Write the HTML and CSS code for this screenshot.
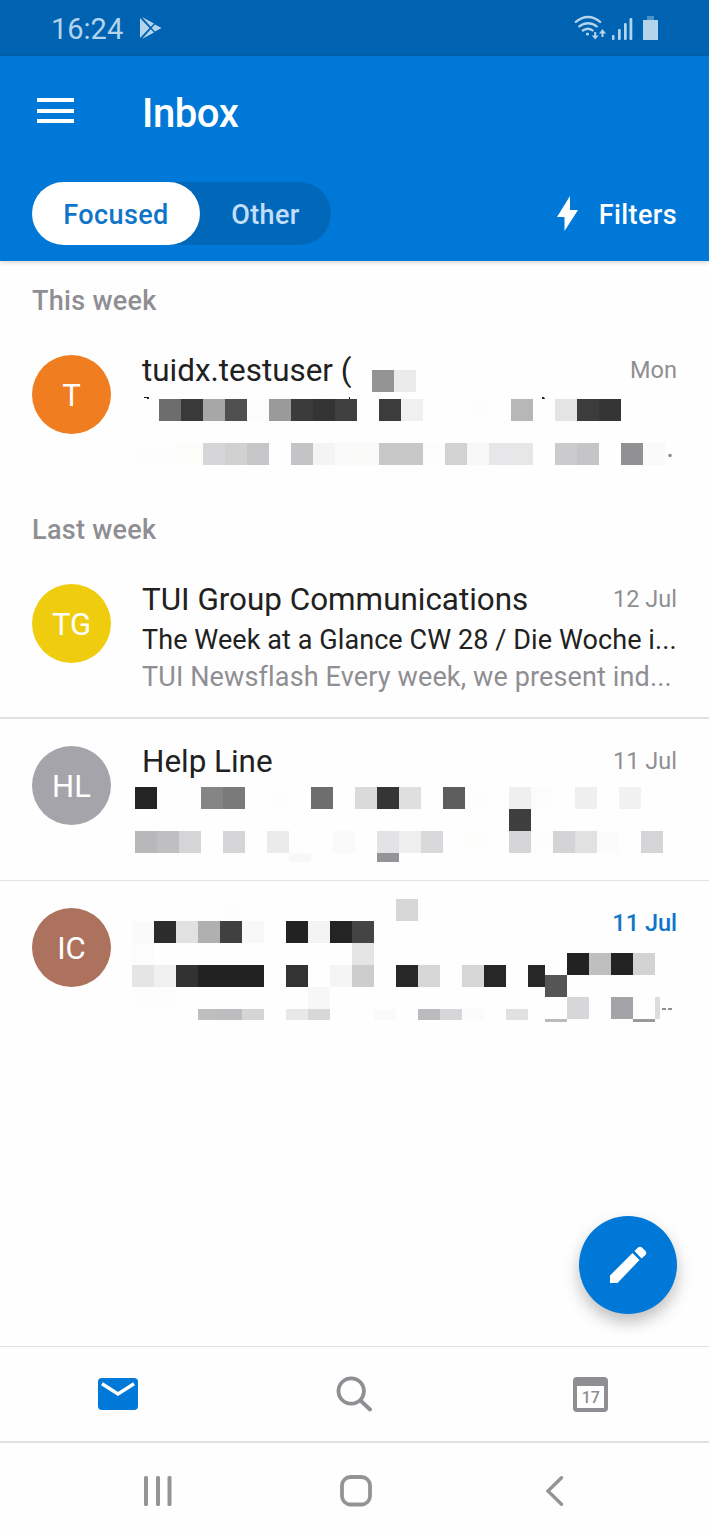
FILE: index.html
```html
<!DOCTYPE html>
<html lang="en">
<head>
    <meta charset="UTF-8">
    <meta name="viewport" content="width=device-width, initial-scale=1.0">
    <title>Inbox</title>
    <link rel="stylesheet" href="styles.css">
</head>
<body>
    <div class="status-bar">
        <span class="clock">16:24</span>
        <svg class="play-icon" width="22" height="22" viewBox="0 0 22 22">
            <path d="M0 1l9.500 10L0 21zM2 0l12 6.500-3.200 3.300zM2 22l12-6.500-3.200-3.300zM15 7.500l6.500 3.500-6.500 3.500-3.300-3.500z"/>
        </svg>
        <svg class="status-icons" width="86" height="26" viewBox="574 15 86 26">
            <g fill="none" stroke="#b4d4ec" stroke-width="2.200">
                <path d="M575 22.500q13-11 26 0M578.500 27q9.500-7.500 19 0M582 31q6-4.500 11.500 0"/>
            </g>
            <g fill="#b4d4ec">
                <circle cx="587.500" cy="34" r="1.600"/>
                <path d="M594.200 32h2v3.500h2.500l-3.500 4-3.500-4h2.500zM601.500 37h2v-3.500h2.500l-3.500-4.500-3.500 4.500h2.500z"/>
                <rect x="612" y="35" width="2.500" height="5" rx="1"/>
                <rect x="618" y="29" width="2.700" height="11" rx="1"/>
                <rect x="624" y="23" width="2.700" height="17" rx="1"/>
                <rect x="629.500" y="18" width="2.800" height="22" rx="1"/>
                <rect x="643" y="20" width="15" height="20"/>
            </g>
            <rect x="647" y="16" width="7" height="4" fill="#4c93ca"/>
        </svg>
    </div>
    <header>
        <div class="title-row">
            <svg class="menu-icon" width="37" height="26" viewBox="0 0 37 26" fill="#fff">
                <rect width="37" height="4"/>
                <rect y="11" width="37" height="4"/>
                <rect y="21" width="37" height="4"/>
            </svg>
            <h1>Inbox</h1>
        </div>
        <div class="filter-row">
            <div class="switch">
                <span class="tab active">Focused</span>
                <span class="tab">Other</span>
            </div>
            <div class="filters">
                <svg width="22" height="36" viewBox="0 0 22 36"><path d="M13 0L0 21h7.500v14L21 14h-8z" fill="#fff"/></svg>
                <span>Filters</span>
            </div>
        </div>
    </header>

    <main>
        <h2>This week</h2>
        <div class="message no-line">
            <div class="avatar orange">T</div>
            <div class="content">
                <div class="top"><span class="sender">tuidx.testuser (</span><span class="date">Mon</span></div>
            </div>
            <svg class="mosaic" id="mosaic1" width="709" height="162" viewBox="0 328 709 162">
                <path d="M144 397h5v2h-2v-1h-3zM349 397h1v2h-1zM542 397h2l1 2h-3z" fill="#222"/>
                <circle cx="670" cy="455.500" r="1.800" fill="#8e8e93"/>
            </svg>
        </div>

        <h2>Last week</h2>
        <div class="message">
            <div class="avatar yellow">TG</div>
            <div class="content">
                <div class="top"><span class="sender">TUI Group Communications</span><span class="date">12 Jul</span></div>
                <div class="subject">The Week at a Glance CW 28 / Die Woche i...</div>
                <div class="preview">TUI Newsflash Every week, we present ind...</div>
            </div>
        </div>
        <div class="message thin-line">
            <div class="avatar gray">HL</div>
            <div class="content">
                <div class="top"><span class="sender">Help Line</span><span class="date">11 Jul</span></div>
            </div>
            <svg class="mosaic" id="mosaic2" width="709" height="161" viewBox="0 719 709 161"></svg>
        </div>
        <div class="message no-line">
            <div class="avatar brown">IC</div>
            <div class="content">
                <div class="top"><span class="sender"></span><span class="date unread">11 Jul</span></div>
            </div>
            <svg class="mosaic" id="mosaic3" width="709" height="162" viewBox="0 881 709 162">
                <path d="M662 1008h4v2h-4zM668 1008h4v2h-4z" fill="#8e8e93"/>
            </svg>
        </div>
        <div class="compose">
            <svg width="38" height="38" viewBox="0 0 38 38" fill="#fff">
                <path d="M1 29.500L23.500 7l7 7L8.500 37H1zM25.500 5L29 1.500q2-1.500 4 0l3.500 3.500q1.500 2 0 4L32.500 12.500z"/>
            </svg>
        </div>
    </main>

    <nav class="tabs">
        <div class="nav-item">
            <svg width="40" height="32" viewBox="0 0 40 32">
                <rect width="40" height="32" rx="4" fill="#0078d7"/>
                <path d="M4 5.800L20 16 36 5.800" fill="none" stroke="#fff" stroke-width="3.400"/>
            </svg>
        </div>
        <div class="nav-item">
            <svg width="36" height="36" viewBox="0 0 36 36" fill="none" stroke="#8e8e93">
                <circle cx="15.200" cy="15" r="12.700" stroke-width="3.800"/>
                <path d="M25.500 25.500l8.500 8" stroke-width="3.800" stroke-linecap="round"/>
            </svg>
        </div>
        <div class="nav-item">
            <div class="calendar">17</div>
        </div>
    </nav>
    <footer>
        <svg class="recents" width="28" height="30" viewBox="0 0 28 30" fill="#949494">
            <rect width="4" height="30" rx="1.500"/>
            <rect x="12" width="4" height="30" rx="1.500"/>
            <rect x="23.500" width="4" height="30" rx="1.500"/>
        </svg>
        <svg class="home" width="32" height="32" viewBox="0 0 32 32">
            <rect x="2" y="2" width="28" height="27.500" rx="8.500" fill="none" stroke="#949494" stroke-width="3.800"/>
        </svg>
        <svg class="back" width="19" height="30" viewBox="0 0 19 30">
            <path d="M16.500 1.800L3 15l13.500 13.200" fill="none" stroke="#949494" stroke-width="3.400" stroke-linecap="round"/>
        </svg>
    </footer>
    <script src="script.js"></script>
</body>
</html>
```
FILE: styles.css
```css
* {
    box-sizing: border-box;
}
body {
    font-family: Roboto, "Liberation Sans", sans-serif;
    margin: 0;
    width: 709px;
    height: 1536px;
    display: flex;
    flex-direction: column;
    background-color: #fefefe;
    color: #212121;
    overflow: hidden;
}
svg {
    display: block;
    flex-shrink: 0;
}
.status-bar {
    height: 56px;
    background-color: #0063b1;
    display: flex;
    align-items: center;
    padding: 0 49px 0 51px;
}
.clock {
    color: #b4d4ec;
    font-size: 29px;
    width: 89px;
    padding-top: 2px;
}
.play-icon {
    fill: #b4d4ec;
}
.status-icons {
    margin-left: auto;
}
header {
    height: 205px;
    background-color: #0078d7;
    color: white;
    padding: 0 32px;
    box-shadow: 0 1px 5px rgba(0, 0, 0, 0.2);
    position: relative;
}
.title-row {
    display: flex;
    align-items: center;
    height: 110px;
    padding-left: 5px;
}
.menu-icon {
    margin-right: 68px;
}
h1 {
    font-size: 40px;
    font-weight: 500;
    letter-spacing: -0.4px;
    margin: 0;
    padding-top: 4px;
}
.filter-row {
    display: flex;
    justify-content: space-between;
    align-items: center;
    margin-top: 16px;
    font-size: 27px;
    font-weight: 500;
    letter-spacing: 0.4px;
}
.switch {
    display: flex;
    width: 299px;
    height: 63px;
    border-radius: 32px;
    background-color: #0067b9;
}
.tab {
    display: flex;
    align-items: center;
    justify-content: center;
    width: 131px;
    padding-top: 3px;
    color: #c2defa;
}
.tab.active {
    width: 168px;
    border-radius: 32px;
    background-color: white;
    color: #0f75c8;
}
.filters {
    display: flex;
    align-items: center;
    gap: 20px;
}
.filters span {
    padding-top: 2px;
}
main {
    flex: 1;
    position: relative;
}
h2 {
    height: 67px;
    margin: 0;
    padding: 24px 32px 0;
    font-size: 27px;
    line-height: 32px;
    font-weight: 500;
    letter-spacing: 0.3px;
    color: #8e8e93;
}
.message {
    position: relative;
    display: flex;
    gap: 31px;
    height: 162px;
    padding: 27px 32px 0;
    border-bottom: 2px solid #e1e1e1;
}
.message.thin-line {
    border-bottom-width: 1px;
}
.message.no-line {
    border-bottom: none;
}
.avatar {
    flex-shrink: 0;
    width: 79px;
    height: 79px;
    border-radius: 50%;
    color: white;
    font-size: 31px;
    line-height: 81px;
    text-align: center;
}
.orange {
    background-color: #f07d20;
}
.yellow {
    background-color: #efcd0e;
}
.gray {
    background-color: #a5a4aa;
}
.brown {
    background-color: #ac725e;
}
.content {
    flex: 1;
    white-space: nowrap;
}
.top {
    display: flex;
    justify-content: space-between;
    height: 37px;
}
.sender {
    font-size: 31.4px;
    line-height: 31px;
}
.date {
    font-size: 23.5px;
    line-height: 30px;
    color: #8e8e93;
}
.date.unread {
    color: #0f75c8;
    font-weight: 500;
}
.subject {
    font-size: 27px;
    line-height: 38px;
    letter-spacing: 0.08px;
}
.preview {
    font-size: 27px;
    line-height: 37px;
    letter-spacing: 0.14px;
    color: #8e8e93;
}
.mosaic {
    position: absolute;
    left: 0;
    top: 0;
}
.compose {
    position: absolute;
    right: 32px;
    bottom: 32px;
    width: 98px;
    height: 98px;
    border-radius: 50%;
    background-color: #0078d7;
    box-shadow: 0 8px 16px rgba(0, 0, 0, 0.25);
    display: flex;
    align-items: center;
    justify-content: center;
}
.tabs {
    display: flex;
    height: 97px;
    border-top: 1px solid #e1e1e1;
    border-bottom: 2px solid #e1e1e1;
}
.nav-item {
    flex: 1;
    display: flex;
    align-items: center;
    justify-content: center;
}
.calendar {
    width: 35px;
    height: 35px;
    border: 4px solid #8e8e93;
    border-top-width: 9px;
    border-radius: 4px;
    color: #8e8e93;
    font-size: 16px;
    font-weight: 500;
    line-height: 24px;
    text-align: center;
}
footer {
    display: flex;
    align-items: center;
    height: 93px;
    padding: 2px 0 0 144px;
}
.home {
    margin-left: 168px;
}
.back {
    margin-left: 173px;
}
```
FILE: script.js
```javascript
// Blocks over hidden text: [y, height, "x color, x color, ..."]
const blocks = {
    mosaic1: [
        [370, 22, "372 949494, 394 ebebeb"],
        [399, 22, "159 6d6d6d, 181 393939, 203 a7a7a7, 225 505050, 247 fcfcfc, 269 9a9a9a, 291 3b3b3b, 313 343434, 335 404040, 379 3c3c3c, 401 f0f0f0, 467 fdfdfd, 511 b7b7b7, 555 e4e4e4, 577 3c3c3c, 599 353535"],
        [443, 22, "137 fdfdfd, 159 fdfdfd, 181 fcfcf9, 203 d6d6d9, 225 d1d1d1, 247 c6c6c9, 291 c4c4c7, 313 f4f4f4, 335 fafafb, 357 fafaf8, 379 c8c8c8, 401 c8c8c8, 423 fcfcfc, 445 d2d2d2, 467 f8f8f8, 489 e7e7ea, 511 e7e7e7, 555 cbcbce, 577 c5c5c8, 621 919193, 643 f9f9f9"]
    ],
    mosaic2: [
        [787, 22, "135 242424, 201 858585, 223 7a7a7a, 267 fdfdfd, 311 6e6e6e, 355 dadada, 377 353535, 399 dfdfdf, 443 5e5e5e, 465 fdfdfd, 509 efefef, 531 fcfcfc, 575 efefef, 619 f1f1f1"],
        [809, 22, "509 3e3e3e"],
        [831, 22, "135 b8b8bb, 157 bfbfc2, 179 d5d5d8, 223 d5d5d8, 267 ebebeb, 333 fafafa, 377 e3e3e6, 399 efefef, 421 d9d9dc, 465 fdfdfb, 509 d5d5d8, 531 fdfdfd, 553 d4d4d7, 575 e1e1e1, 597 fbfbfb, 641 d5d5d8"],
        [853, 9, "289 f8f8f8, 377 949498"]
    ],
    mosaic3: [
        [899, 22, "220 fdfdfd, 396 d7d7d7"],
        [921, 22, "132 fafafa, 154 2c2c2c, 176 e1e1e1, 198 b0b0b0, 220 404040, 242 f8f8f8, 286 222222, 308 f3f3f3, 330 242424, 352 444444"],
        [943, 22, "132 fcfcfc, 352 e5e5e5"],
        [965, 22, "132 e5e5e5, 154 f0f0f0, 176 323232, 198 222222, 220 212121, 242 222222, 286 333333, 330 f5f5f5, 352 cdcdcd, 396 282828, 418 d7d7d7, 462 d7d7d7, 484 272727, 528 282828 17"],
        [987, 22, "132 fdfdfd, 154 fcfcfc, 308 f7f7f7"],
        [1009, 11, "198 bebebe, 220 bdbdc0, 242 d5d5d5, 286 e8e8e8, 308 d8d8d8, 374 fafafa, 418 bbbbbd, 440 d6d6d8, 462 fbfbfb, 506 e1e1e1"],
        [953, 22, "567 222222, 589 bfbfbf, 611 232323, 633 d3d3d3"],
        [975, 22, "545 555555"],
        [997, 22, "567 d7d7da, 611 a4a4a8, 655 dcdcdc 5"],
        [1019, 3, "545 bbbbbb, 633 999999"]
    ]
};

for (const id in blocks) {
    const svg = document.getElementById(id);
    blocks[id].forEach(function ([y, height, cells]) {
        cells.split(", ").forEach(function (cell) {
            const [x, color, width] = cell.split(" ");
            const rect = document.createElementNS("http://www.w3.org/2000/svg", "rect");
            rect.setAttribute("x", x);
            rect.setAttribute("y", y);
            rect.setAttribute("width", width || 22);
            rect.setAttribute("height", height);
            rect.setAttribute("fill", "#" + color);
            svg.appendChild(rect);
        });
    });
}
```
